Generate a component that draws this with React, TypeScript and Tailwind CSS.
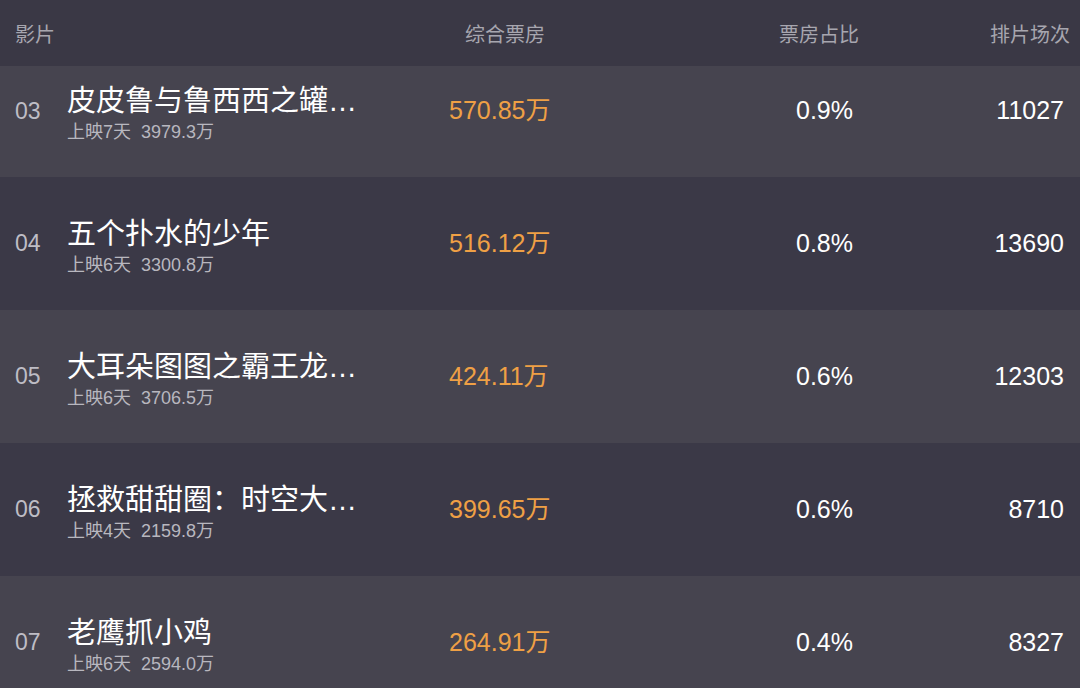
const rows = [
  { no: "03", title: "皮皮鲁与鲁西西之罐…", days: "上映7天", total: "3979.3万", box: "570.85万", rate: "0.9%", shows: "11027" },
  { no: "04", title: "五个扑水的少年", days: "上映6天", total: "3300.8万", box: "516.12万", rate: "0.8%", shows: "13690" },
  { no: "05", title: "大耳朵图图之霸王龙…", days: "上映6天", total: "3706.5万", box: "424.11万", rate: "0.6%", shows: "12303" },
  { no: "06", title: "拯救甜甜圈：时空大…", days: "上映4天", total: "2159.8万", box: "399.65万", rate: "0.6%", shows: "8710" },
  { no: "07", title: "老鹰抓小鸡", days: "上映6天", total: "2594.0万", box: "264.91万", rate: "0.4%", shows: "8327" },
];

const font = { fontFamily: '"Liberation Sans", "Noto Sans CJK SC", sans-serif' };

export default function App() {
  return (
    <div className="w-[1080px] h-[688px] overflow-hidden bg-[#3b3947]" style={font}>
      <div className="h-[66px] flex items-center pt-[3px] bg-[#3a3845] text-[20px] text-[#a7a6af]">
        <div className="w-[449px] pl-[15px]">影片</div>
        <div className="w-[410px] flex justify-between">
          <span className="pl-[16px]">综合票房</span>
          <span>票房占比</span>
        </div>
        <div className="w-[211px] text-right">排片场次</div>
      </div>
      {rows.map((r, i) => (
        <div
          key={r.no}
          className={
            "flex items-center " +
            (i === 0 ? "h-[111px] pb-[21px] " : "h-[133px] ") +
            (i % 2 === 0 ? "bg-[#46444f]" : "bg-[#3b3947]")
          }
        >
          <div className="w-[67px] pl-[15px] text-[23px] text-[#bebdc5]">{r.no}</div>
          <div className="w-[382px] flex flex-col mt-[4px]">
            <div className="text-[29px] leading-[36px] text-white whitespace-nowrap">{r.title}</div>
            <div className="text-[18px] leading-[22px] text-[#b8b7bf] mt-[2px] whitespace-pre">
              {r.days}  {r.total}
            </div>
          </div>
          <div className="w-[404px] flex justify-between items-center text-[25px]">
            <span className="text-[#efa045]">{r.box}</span>
            <span className="text-white">{r.rate}</span>
          </div>
          <div className="w-[211px] text-right text-[25px] text-white">{r.shows}</div>
        </div>
      ))}
    </div>
  );
}
